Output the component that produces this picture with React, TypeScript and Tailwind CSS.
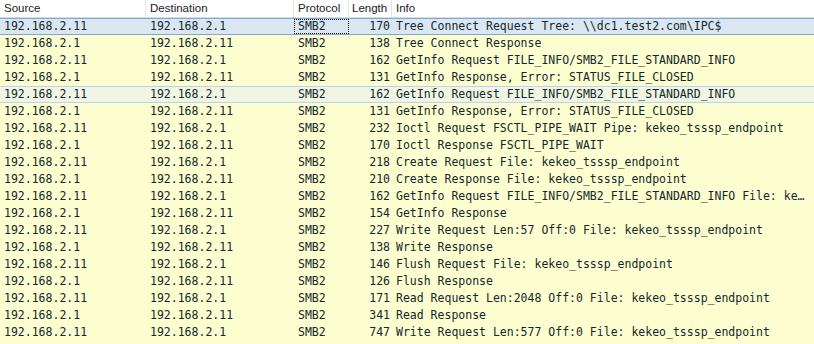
import React from "react";

type Row = { src: string; dst: string; proto: string; len: string; info: string };

const rows: Row[] = [
  { src: "192.168.2.11", dst: "192.168.2.1", proto: "SMB2", len: "170", info: "Tree Connect Request Tree: \\\\dc1.test2.com\\IPC$" },
  { src: "192.168.2.1", dst: "192.168.2.11", proto: "SMB2", len: "138", info: "Tree Connect Response" },
  { src: "192.168.2.11", dst: "192.168.2.1", proto: "SMB2", len: "162", info: "GetInfo Request FILE_INFO/SMB2_FILE_STANDARD_INFO" },
  { src: "192.168.2.1", dst: "192.168.2.11", proto: "SMB2", len: "131", info: "GetInfo Response, Error: STATUS_FILE_CLOSED" },
  { src: "192.168.2.11", dst: "192.168.2.1", proto: "SMB2", len: "162", info: "GetInfo Request FILE_INFO/SMB2_FILE_STANDARD_INFO" },
  { src: "192.168.2.1", dst: "192.168.2.11", proto: "SMB2", len: "131", info: "GetInfo Response, Error: STATUS_FILE_CLOSED" },
  { src: "192.168.2.11", dst: "192.168.2.1", proto: "SMB2", len: "232", info: "Ioctl Request FSCTL_PIPE_WAIT Pipe: kekeo_tsssp_endpoint" },
  { src: "192.168.2.1", dst: "192.168.2.11", proto: "SMB2", len: "170", info: "Ioctl Response FSCTL_PIPE_WAIT" },
  { src: "192.168.2.11", dst: "192.168.2.1", proto: "SMB2", len: "218", info: "Create Request File: kekeo_tsssp_endpoint" },
  { src: "192.168.2.1", dst: "192.168.2.11", proto: "SMB2", len: "210", info: "Create Response File: kekeo_tsssp_endpoint" },
  { src: "192.168.2.11", dst: "192.168.2.1", proto: "SMB2", len: "162", info: "GetInfo Request FILE_INFO/SMB2_FILE_STANDARD_INFO File: ke\u2026" },
  { src: "192.168.2.1", dst: "192.168.2.11", proto: "SMB2", len: "154", info: "GetInfo Response" },
  { src: "192.168.2.11", dst: "192.168.2.1", proto: "SMB2", len: "227", info: "Write Request Len:57 Off:0 File: kekeo_tsssp_endpoint" },
  { src: "192.168.2.1", dst: "192.168.2.11", proto: "SMB2", len: "138", info: "Write Response" },
  { src: "192.168.2.11", dst: "192.168.2.1", proto: "SMB2", len: "146", info: "Flush Request File: kekeo_tsssp_endpoint" },
  { src: "192.168.2.1", dst: "192.168.2.11", proto: "SMB2", len: "126", info: "Flush Response" },
  { src: "192.168.2.11", dst: "192.168.2.1", proto: "SMB2", len: "171", info: "Read Request Len:2048 Off:0 File: kekeo_tsssp_endpoint" },
  { src: "192.168.2.1", dst: "192.168.2.11", proto: "SMB2", len: "341", info: "Read Response" },
  { src: "192.168.2.11", dst: "192.168.2.1", proto: "SMB2", len: "747", info: "Write Request Len:577 Off:0 File: kekeo_tsssp_endpoint" },
];

const mono = { fontFamily: '"DejaVu Sans Mono", "Liberation Mono", monospace' };
const sans = { fontFamily: '"Liberation Sans", Arial, sans-serif' };

export default function App() {
  return (
    <div className="w-[814px] h-[344px] overflow-hidden bg-[#feffd0]">
      <div
        className="flex h-[18px] bg-white border-b border-[#dcdcdc] text-[11.5px] text-[#1b1b1b] leading-[17px]"
        style={sans}
      >
        <div className="w-[146px] shrink-0 pl-[4px] border-r border-[#e5e5e5]">Source</div>
        <div className="w-[148px] shrink-0 pl-[4px] border-r border-[#e5e5e5]">Destination</div>
        <div className="w-[55px] shrink-0 pl-[4px] border-r border-[#e5e5e5]">Protocol</div>
        <div className="w-[43px] shrink-0 pl-[3px] border-r border-[#e5e5e5]">Length</div>
        <div className="flex-1 pl-[4px]">Info</div>
      </div>
      <div className="text-[11.5px] text-[#12272e]" style={mono}>
        {rows.map((r, i) => {
          const selected = i === 0;
          const hover = i === 4;
          const rowCls = selected
            ? "bg-[#dae7f3] border-y border-[#7fa7d8]"
            : hover
            ? "bg-[#f1f6e4] border-y border-[#b6d3f2]"
            : "bg-[#feffd0]";
          return (
            <div key={i} className={`flex h-[17px] items-center leading-[15px] ${rowCls}`}>
              <div className="w-[146px] shrink-0 pl-[4px] whitespace-nowrap">{r.src}</div>
              <div className="w-[148px] shrink-0 pl-[4px] whitespace-nowrap">{r.dst}</div>
              <div
                className={`w-[55px] shrink-0 pl-[3px] whitespace-nowrap h-[15px] flex items-center leading-[13px] ${
                  selected ? "border border-dotted border-black" : "border border-transparent"
                }`}
              >
                {r.proto}
              </div>
              <div className="w-[43px] shrink-0 pr-[2px] text-right whitespace-nowrap">{r.len}</div>
              <div className="flex-1 min-w-0 pl-[4px] pr-[3px] whitespace-nowrap overflow-hidden">
                {r.info}
              </div>
            </div>
          );
        })}
      </div>
    </div>
  );
}
